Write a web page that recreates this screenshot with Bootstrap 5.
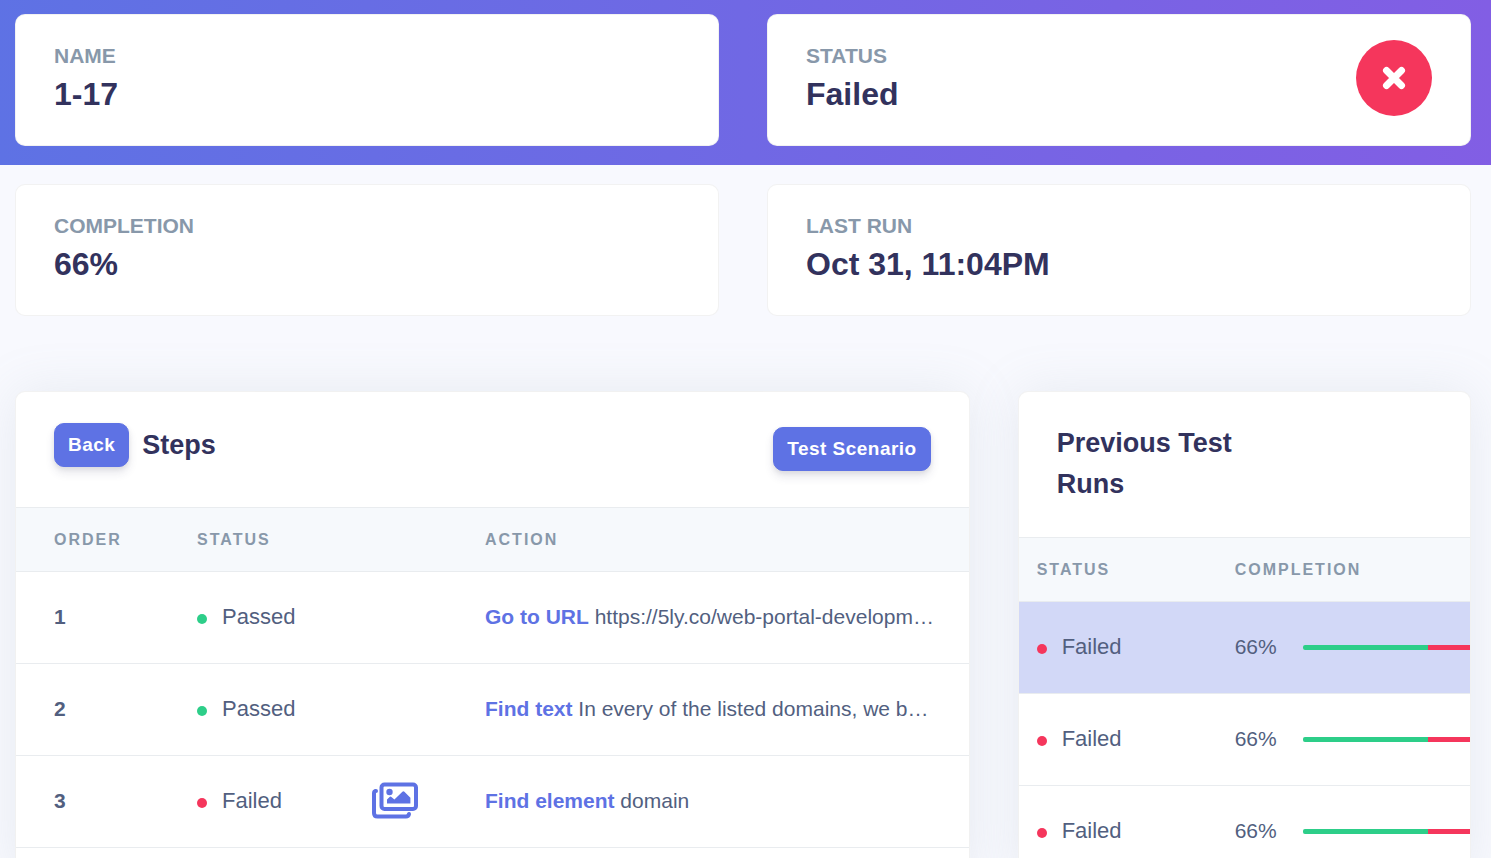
<!DOCTYPE html>
<html lang="en">
<head>
<meta charset="utf-8">
<meta name="viewport" content="width=device-width, initial-scale=1">
<title>Test run 1-17</title>
<link href="https://cdn.jsdelivr.net/npm/bootstrap@5.3.0/dist/css/bootstrap.min.css" rel="stylesheet">
<style>
  :root { --brand: #5e72e4; --ink: #32325d; --body-ink: #525f7f; --soft: #8898aa; --line: #e9ecef; --good: #2dce89; --bad: #f5365c; }
  body { font-family: "Liberation Sans", Arial, sans-serif; font-size: 21px; color: var(--body-ink); background: #f8f9fe; }
  .page-pad { padding-left: 15px; padding-right: 20px; }
  .page-pad > .row { --bs-gutter-x: 48px; }
  .hero { background: linear-gradient(87deg, #5e72e4, #825ee4); padding-top: 14px; padding-bottom: 19px; }
  .hero-rest { padding-top: 19px; padding-bottom: 75px; }
  .card { --bs-card-border-color: rgba(0,0,0,.05); --bs-card-border-radius: 10px; --bs-card-inner-border-radius: 9px; }
  .stat .card-body { padding: 25px 38px 29px; }
  .stat-label { font-size: 21px; line-height: 32px; font-weight: 700; color: var(--soft); text-transform: uppercase; margin: 0; }
  .stat-value { font-size: 32px; line-height: 44px; font-weight: 700; color: var(--ink); margin: 0; }
  .stat-icon { width: 76px; height: 76px; background: var(--bad); }
  .panel { box-shadow: 0 0 51px rgba(136,152,170,.15); border-bottom: 0; border-bottom-left-radius: 0; border-bottom-right-radius: 0; }
  .panel-head { padding: 31px 38px 32px; }
  .steps-head { height: 115px; }
  .title-group { gap: 13px; }
  .panel h3 { font-size: 27px; line-height: 41px; font-weight: 700; color: var(--ink); margin: 0; }
  .btn-brand { --bs-btn-color: #fff; --bs-btn-bg: var(--brand); --bs-btn-border-color: var(--brand); --bs-btn-hover-color: #fff; --bs-btn-hover-bg: #485fe0; --bs-btn-hover-border-color: #485fe0;
    --bs-btn-font-size: 19px; --bs-btn-font-weight: 700; --bs-btn-line-height: 28px; --bs-btn-padding-y: 7px; --bs-btn-padding-x: 13px; --bs-btn-border-radius: 10px;
    letter-spacing: .025em; box-shadow: 0 6px 10px rgba(50,50,93,.11), 0 2px 5px rgba(0,0,0,.08); }
  .run-table { --bs-table-color: var(--body-ink); --bs-table-bg: transparent; table-layout: fixed; margin: 0; white-space: nowrap; }
  .run-table > :not(caption) > * > * { padding: 0 19px 2px; border-color: var(--line); vertical-align: middle; height: 92px; }
  .run-table > thead > tr > th { height: 64px; padding-bottom: 0; font-size: 16px; letter-spacing: 2px; text-transform: uppercase; color: var(--soft); background: #f6f9fc; border-top: 1px solid var(--line); }
  .steps-table > :not(caption) > * > :first-child { padding-left: 38px; }
  .previous-table > :not(caption) > * > * { padding-left: 18px; }
  .previous-table { width: 510px; }
  .run-table > tbody > tr.current > td { background: #d2d8f7; }
  .w-order { width: 162px; } .w-state { width: 174px; } .w-shot { width: 114px; } .w-prev { width: 198px; }
  .state { font-size: 22px; line-height: 32px; gap: 15px; }
  .state::before { content: ""; width: 10px; height: 10px; margin-top: 4px; border-radius: 50%; background: var(--good); }
  .state.failed::before { background: var(--bad); }
  .action { color: var(--brand); font-weight: 700; text-decoration: none; }
  .progress { --bs-progress-height: 5px; --bs-progress-border-radius: 2px; width: 190px; flex-shrink: 0; margin-left: 26px; margin-top: 2px; }
  .bar-good { background: var(--good); } .bar-bad { background: var(--bad); }
</style>
</head>
<body class="vh-100 overflow-hidden d-flex flex-column">
<header class="hero page-pad">
  <div class="row">
    <div class="col-6"><div class="card stat"><div class="card-body">
      <h5 class="stat-label">Name</h5><p class="stat-value">1-17</p>
    </div></div></div>
    <div class="col-6"><div class="card stat"><div class="card-body d-flex justify-content-between">
      <div><h5 class="stat-label">Status</h5><p class="stat-value">Failed</p></div>
      <div class="stat-icon rounded-circle d-flex align-items-center justify-content-center">
        <svg width="24" height="24" viewBox="0 0 24 24" fill="none" stroke="#fff" stroke-width="7" stroke-linecap="round" aria-hidden="true"><path d="M4.500 4.500l15 15M19.500 4.500l-15 15"/></svg>
      </div>
    </div></div></div>
  </div>
</header>
<section class="hero-rest page-pad">
  <div class="row">
    <div class="col-6"><div class="card stat"><div class="card-body">
      <h5 class="stat-label">Completion</h5><p class="stat-value">66%</p>
    </div></div></div>
    <div class="col-6"><div class="card stat"><div class="card-body">
      <h5 class="stat-label">Last run</h5><p class="stat-value">Oct 31, 11:04PM</p>
    </div></div></div>
  </div>
</section>
<main class="page-pad flex-grow-1 d-flex flex-column">
  <div class="row flex-grow-1">
    <div class="col-8 d-flex"><div class="card panel w-100">
      <div class="panel-head steps-head d-flex align-items-center justify-content-between">
        <div class="title-group d-flex align-items-center mb-2">
          <button type="button" class="btn btn-brand">Back</button>
          <h3>Steps</h3>
        </div>
        <button type="button" class="btn btn-brand">Test Scenario</button>
      </div>
      <table class="table run-table steps-table">
        <colgroup><col class="w-order"><col class="w-state"><col class="w-shot"><col></colgroup>
        <thead><tr><th scope="col">Order</th><th scope="col">Status</th><th></th><th scope="col">Action</th></tr></thead>
        <tbody>
          <tr><th scope="row">1</th><td><span class="state d-flex align-items-center">Passed</span></td><td></td>
            <td><a class="action" href="#">Go to URL</a> https://5ly.co/web-portal-developm…</td></tr>
          <tr><th scope="row">2</th><td><span class="state d-flex align-items-center">Passed</span></td><td></td>
            <td><a class="action" href="#">Find text</a> In every of the listed domains, we b…</td></tr>
          <tr><th scope="row">3</th><td><span class="state failed d-flex align-items-center">Failed</span></td>
            <td><a href="#" aria-label="Screenshots"><svg class="d-block" width="48" height="37" viewBox="0 0 48 37" fill="none" aria-hidden="true">
              <rect x="10.500" y="2.500" width="34.500" height="24.500" rx="3" stroke="#5e72e4" stroke-width="4"/>
              <path d="M5 9H4.500Q3 9.500 3 11.500V31q0 3.500 3.500 3.500H35q2.500 0 3-2.500" stroke="#5e72e4" stroke-width="4" stroke-linecap="round"/>
              <circle cx="18.500" cy="10" r="3.200" fill="#5e72e4"/>
              <path d="M16 21.500v-4l2.600-2.600q.9-.8 1.800 0l3 2.600 8-7.800q1-.9 2 0l6 6v5.800z" fill="#5e72e4"/>
            </svg></a></td>
            <td><a class="action" href="#">Find element</a> domain</td></tr>
        </tbody>
      </table>
    </div></div>
    <div class="col-4 d-flex"><div class="card panel w-100">
      <div class="panel-head"><div class="row"><h3 class="col-8">Previous Test Runs</h3></div></div>
      <div class="overflow-hidden flex-shrink-0">
      <table class="table run-table previous-table">
        <colgroup><col class="w-prev"><col></colgroup>
        <thead><tr><th scope="col">Status</th><th scope="col">Completion</th></tr></thead>
        <tbody>
          <tr class="current"><td><span class="state failed d-flex align-items-center">Failed</span></td>
            <td><div class="d-flex align-items-center">66%<div class="progress"><div class="progress-bar bar-good" style="width:66%"></div><div class="progress-bar bar-bad" style="width:34%"></div></div></div></td></tr>
          <tr><td><span class="state failed d-flex align-items-center">Failed</span></td>
            <td><div class="d-flex align-items-center">66%<div class="progress"><div class="progress-bar bar-good" style="width:66%"></div><div class="progress-bar bar-bad" style="width:34%"></div></div></div></td></tr>
          <tr><td><span class="state failed d-flex align-items-center">Failed</span></td>
            <td><div class="d-flex align-items-center">66%<div class="progress"><div class="progress-bar bar-good" style="width:66%"></div><div class="progress-bar bar-bad" style="width:34%"></div></div></div></td></tr>
        </tbody>
      </table>
      </div>
    </div></div>
  </div>
</main>
<script src="https://cdn.jsdelivr.net/npm/bootstrap@5.3.0/dist/js/bootstrap.bundle.min.js"></script>
</body>
</html>
